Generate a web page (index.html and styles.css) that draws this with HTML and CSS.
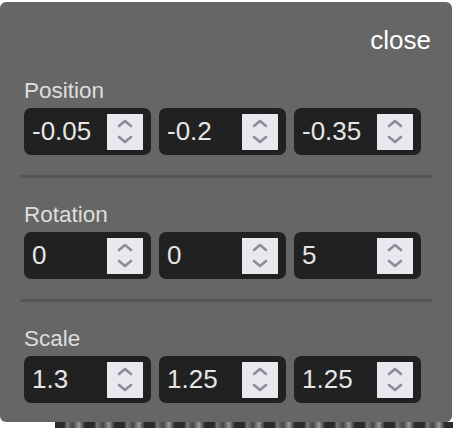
FILE: index.html
```html
<!DOCTYPE html>
<html lang="en">
    <head>
        <meta charset="UTF-8" />
        <meta name="viewport" content="width=device-width, initial-scale=1.0" />
        <title>Transform</title>
        <link rel="stylesheet" href="styles.css">
    </head>
    <body>
        <div id="panel">
            <div id="head">close</div>

            <div class="label">Position</div>
            <div class="row">
                <div class="field"><span class="value">-0.05</span><div class="spin"><svg viewBox="0 0 36 36"><path d="M12 12 L18 7 L24 12 M12 23 L18 28 L24 23"/></svg></div></div>
                <div class="field"><span class="value">-0.2</span><div class="spin"><svg viewBox="0 0 36 36"><path d="M12 12 L18 7 L24 12 M12 23 L18 28 L24 23"/></svg></div></div>
                <div class="field"><span class="value">-0.35</span><div class="spin"><svg viewBox="0 0 36 36"><path d="M12 12 L18 7 L24 12 M12 23 L18 28 L24 23"/></svg></div></div>
            </div>

            <div class="sep"></div>

            <div class="label">Rotation</div>
            <div class="row">
                <div class="field"><span class="value">0</span><div class="spin"><svg viewBox="0 0 36 36"><path d="M12 12 L18 7 L24 12 M12 23 L18 28 L24 23"/></svg></div></div>
                <div class="field"><span class="value">0</span><div class="spin"><svg viewBox="0 0 36 36"><path d="M12 12 L18 7 L24 12 M12 23 L18 28 L24 23"/></svg></div></div>
                <div class="field"><span class="value">5</span><div class="spin"><svg viewBox="0 0 36 36"><path d="M12 12 L18 7 L24 12 M12 23 L18 28 L24 23"/></svg></div></div>
            </div>

            <div class="sep"></div>

            <div class="label">Scale</div>
            <div class="row">
                <div class="field"><span class="value">1.3</span><div class="spin"><svg viewBox="0 0 36 36"><path d="M12 12 L18 7 L24 12 M12 23 L18 28 L24 23"/></svg></div></div>
                <div class="field"><span class="value">1.25</span><div class="spin"><svg viewBox="0 0 36 36"><path d="M12 12 L18 7 L24 12 M12 23 L18 28 L24 23"/></svg></div></div>
                <div class="field"><span class="value">1.25</span><div class="spin"><svg viewBox="0 0 36 36"><path d="M12 12 L18 7 L24 12 M12 23 L18 28 L24 23"/></svg></div></div>
            </div>
        </div>
        <div id="scene"></div>
    </body>
</html>
```

FILE: styles.css
```css
body {
    margin: 0;
    background-color: #ffffff;
    font-family: "Liberation Sans", Arial, sans-serif;
    overflow: hidden;
}
#panel {
    margin-top: 2px;
    width: 452px;
    height: 420px;
    box-sizing: border-box;
    padding: 24px 20px 0;
    background-color: #666666;
    border-radius: 6px;
}
#head {
    height: 28px;
    line-height: 28px;
    font-size: 26px;
    color: #ffffff;
    text-align: right;
    padding-right: 1px;
    margin-bottom: 24px;
}
.label {
    margin-left: 4px;
    line-height: 26px;
    font-size: 22.5px;
    color: #dedede;
}
.row {
    display: flex;
    gap: 8px;
    margin: 4px 0 0 4px;
}
.field {
    width: 127px;
    height: 47px;
    box-sizing: border-box;
    padding: 0 8px;
    display: flex;
    align-items: center;
    justify-content: space-between;
    background-color: #212121;
    border-radius: 7px;
}
.value {
    font-size: 26px;
    color: #e6e6e6;
}
.spin {
    width: 36px;
    height: 36px;
    background-color: #e9e8ee;
}
.spin svg {
    display: block;
    width: 36px;
    height: 36px;
}
.spin path {
    fill: none;
    stroke: #8e8b9b;
    stroke-width: 2.6;
    stroke-linecap: round;
    stroke-linejoin: round;
}
.sep {
    height: 3px;
    margin: 20px 0 24px;
    background-color: #565656;
}
#scene {
    margin-left: 55px;
    height: 20px;
    background: repeating-linear-gradient(90deg, #2b2b2b 0, #2b2b2b 9px, #7a7a7a 12px, #444 18px, #9a9a9a 24px, #2b2b2b 30px);
}
```
